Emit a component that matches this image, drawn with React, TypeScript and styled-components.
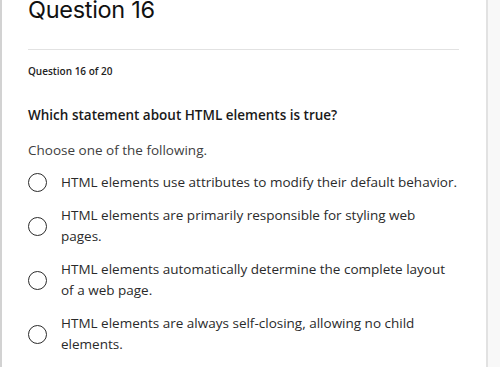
import React from "react";
import styled, { createGlobalStyle } from "styled-components";

const Global = createGlobalStyle`
  html, body { margin: 0; padding: 0; background: #f8f8f8; }
  body { font-family: "Open Sans", "Liberation Sans", sans-serif; color: #222; }
`;

const Page = styled.div`
  display: flex;
  height: 367px;
  overflow: hidden;
`;

const Panel = styled.main`
  width: 488px;
  border-left: 2px solid #d2d2d2;
  border-right: 2px solid #e2e2e2;
  background: #fff;
  padding: 0 27px 0 26px;
  box-sizing: border-box;
  flex: none;
`;

const Title = styled.h1`
  font-family: Inter, "Liberation Sans", sans-serif;
  font-weight: 400;
  font-size: 23.5px;
  line-height: 28px;
  margin: -4px 0 0;
  color: #111;
  letter-spacing: -0.3px;
`;

const Divider = styled.hr`
  border: 0;
  border-top: 1px solid #e2e2e2;
  margin: 25px 0 0;
`;

const Counter = styled.div`
  font-size: 10px;
  font-weight: 600;
  line-height: 14px;
  margin-top: 14px;
  color: #222;
`;

const Prompt = styled.div`
  font-size: 13.5px;
  font-weight: 600;
  line-height: 18px;
  margin-top: 28px;
  color: #1a1a1a;
`;

const Hint = styled.div`
  font-size: 13.5px;
  line-height: 18px;
  margin-top: 17px;
  color: #404040;
`;

const Options = styled.div`
  display: flex;
  flex-direction: column;
  gap: 12px;
  margin-top: 13px;
`;

const Option = styled.label`
  display: flex;
  align-items: center;
  gap: 14px;
  font-size: 13.5px;
  line-height: 21px;
  color: #2a2a2a;
`;

const Radio = styled.span`
  flex: none;
  width: 17px;
  height: 17px;
  border: 1.8px solid #2b2b2b;
  border-radius: 50%;
`;

const OptionText = styled.span`
  flex: 1;
`;

const Side = styled.div`
  flex: 1;
  background: #f8f8f8;
`;

const options = [
  "HTML elements use attributes to modify their default behavior.",
  "HTML elements are primarily responsible for styling web pages.",
  "HTML elements automatically determine the complete layout of a web page.",
  "HTML elements are always self-closing, allowing no child elements.",
];

export default function App() {
  return (
    <>
      <Global />
      <Page>
        <Panel>
          <Title>Question 16</Title>
          <Divider />
          <Counter>Question 16 of 20</Counter>
          <Prompt>Which statement about HTML elements is true?</Prompt>
          <Hint>Choose one of the following.</Hint>
          <Options>
            {options.map((o) => (
              <Option key={o}>
                <Radio />
                <OptionText>{o}</OptionText>
              </Option>
            ))}
          </Options>
        </Panel>
        <Side />
      </Page>
    </>
  );
}
